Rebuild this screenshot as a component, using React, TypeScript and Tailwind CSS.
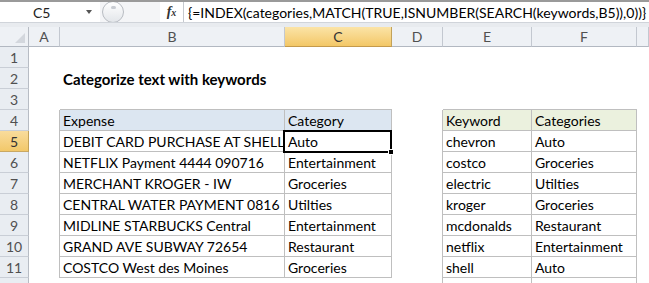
import React from "react";

const COLS = ["A", "B", "C", "D", "E", "F", ""];
const COL_W = ["w-[31px]", "w-[225px]", "w-[107px]", "w-[51px]", "w-[89px]", "w-[105px]", "w-[12px]"];

type CellDef = { text?: string; fill?: string };

const expenses: [string, string][] = [
  ["DEBIT CARD PURCHASE AT SHELL", "Auto"],
  ["NETFLIX Payment 4444 090716", "Entertainment"],
  ["MERCHANT KROGER - IW", "Groceries"],
  ["CENTRAL WATER PAYMENT 0816", "Utilties"],
  ["MIDLINE STARBUCKS Central", "Entertainment"],
  ["GRAND AVE SUBWAY 72654", "Restaurant"],
  ["COSTCO West des Moines", "Groceries"],
];

const keywords: [string, string][] = [
  ["chevron", "Auto"],
  ["costco", "Groceries"],
  ["electric", "Utilties"],
  ["kroger", "Groceries"],
  ["mcdonalds", "Restaurant"],
  ["netflix", "Entertainment"],
  ["shell", "Auto"],
  ["", ""],
];

function cellContent(row: number, col: number): CellDef {
  if (row === 2 && col === 1) return { text: "Categorize text with keywords" };
  if (row === 4) {
    if (col === 1) return { text: "Expense", fill: "bg-[#dce6f1]" };
    if (col === 2) return { text: "Category", fill: "bg-[#dce6f1]" };
    if (col === 4) return { text: "Keyword", fill: "bg-[#ebf1de]" };
    if (col === 5) return { text: "Categories", fill: "bg-[#ebf1de]" };
  }
  if (row >= 5 && row <= 11) {
    const e = expenses[row - 5];
    if (col === 1) return { text: e[0] };
    if (col === 2) return { text: e[1] };
  }
  if (row >= 5 && row <= 12) {
    const k = keywords[row - 5];
    if (col === 4) return { text: k[0] };
    if (col === 5) return { text: k[1] };
  }
  return {};
}

function inT1(row: number, col: number) {
  return row >= 4 && row <= 11 && (col === 1 || col === 2);
}
function inT2(row: number, col: number) {
  return row >= 4 && row <= 12 && (col === 4 || col === 5);
}
function inTable(row: number, col: number) {
  return inT1(row, col) || inT2(row, col);
}

function Cell({ row, col }: { row: number; col: number }) {
  const c = cellContent(row, col);
  const tbl = inTable(row, col);
  const rightB = tbl || inTable(row, col + 1);
  const bottomB = (tbl && !(row === 12)) || inTable(row + 1, col);
  const selected = row === 5 && col === 2;
  const isTitle = row === 2 && col === 1;
  return (
    <div
      className={[
        "relative h-[21px] shrink-0 flex items-center whitespace-nowrap",
        COL_W[col],
        rightB ? "border-r border-r-[#bfbfbf]" : "",
        bottomB ? "border-b border-b-[#bfbfbf]" : "",
        c.fill ?? "",
      ].join(" ")}
    >
      {c.text ? (
        <span
          className={
            isTitle
              ? "pl-[3px] pt-[2px] text-[15px] font-bold text-black leading-none"
              : "pl-[3px] pt-[2px] text-[14px] text-black leading-none"
          }
        >
          {c.text}
        </span>
      ) : null}
      {selected ? (
        <div className="absolute left-[-2px] top-[-1px] right-[-1px] bottom-[-2px] border-2 border-black z-10">
          <div className="absolute right-[-4px] bottom-[-4px] w-[6px] h-[6px] bg-black border border-white" />
        </div>
      ) : null}
    </div>
  );
}

function RowHeader({ n }: { n: number }) {
  const sel = n === 5;
  return (
    <div
      className={[
        "w-[29px] h-[21px] shrink-0 flex items-center justify-center border-r border-b text-[14px] leading-none pt-[1px]",
        sel
          ? "bg-gradient-to-b from-[#f9dc9c] to-[#f2c869] border-r-[#c2a25a] border-b-[#c9a863] text-[#333]"
          : "bg-[#e9edf2] border-r-[#b7bcc4] border-b-[#c9ced6] text-[#505050]",
      ].join(" ")}
    >
      {n}
    </div>
  );
}

function ColHeader({ i }: { i: number }) {
  const sel = i === 2;
  return (
    <div
      className={[
        "h-[20px] shrink-0 flex items-center justify-center border-r border-b text-[14px] leading-none pt-[1px]",
        COL_W[i],
        sel
          ? "bg-gradient-to-b from-[#fbe4a6] to-[#f3c766] border-r-[#c2a25a] border-b-[#c49a4c] text-[#333]"
          : "bg-[#eef1f5] border-r-[#c3c8d0] border-b-[#b2b8c1] text-[#505050]",
      ].join(" ")}
    >
      {COLS[i]}
    </div>
  );
}

export default function App() {
  const rows = Array.from({ length: 12 }, (_, i) => i + 1);
  return (
    <div className="w-[649px] h-[283px] overflow-hidden bg-white font-['Lato',_'Open_Sans',_sans-serif]">
      {/* Formula bar */}
      <div className="h-[27px] border-t-2 border-t-[#9a9a9a] bg-[#e8ebef] flex flex-col">
        <div className="h-[20px] flex items-stretch bg-white">
          <div className="w-[100px] flex items-center relative">
            <span className="pl-[33px] pt-[1px] text-[14px] text-[#222] leading-none">C5</span>
            <span className="absolute left-[86px] top-[8px] w-0 h-0 border-l-[3px] border-r-[3px] border-t-[4px] border-l-transparent border-r-transparent border-t-[#555]" />
          </div>
          <div className="w-[60px] flex items-center bg-[#f4f5f7] overflow-hidden">
            <div className="ml-[2px] w-[22px] h-[22px] rounded-full border border-[#b8bcc2] bg-gradient-to-b from-white to-[#e3e6ea] flex items-start justify-center">
              <div className="mt-[4px] w-[5px] h-[3px] rounded-full bg-[#c8ccd2]" />
            </div>
          </div>
          <div className="w-[24px] flex items-center justify-center border-r border-r-[#c5c9cf] bg-white">
            <span className="font-['Liberation_Serif',_serif] italic font-bold text-[14px] text-[#333] leading-none">
              f<span className="text-[10px]">x</span>
            </span>
          </div>
          <div className="flex-1 flex items-center pl-[4px] overflow-hidden whitespace-nowrap">
            <span className="pt-[1px] text-[14px] text-black leading-none">
              {"{=INDEX(categories,MATCH(TRUE,ISNUMBER(SEARCH(keywords,B5)),0))}"}
            </span>
          </div>
        </div>
        <div className="flex-1 border-t border-t-[#d0d4da]" />
      </div>

      {/* Column headers */}
      <div className="flex">
        <div className="w-[29px] h-[20px] shrink-0 bg-[#eef1f5] border-r border-b border-r-[#b7bcc4] border-b-[#b2b8c1] flex items-end justify-end p-[3px]">
          <svg width="10" height="10" viewBox="0 0 10 10">
            <polygon points="10,0 10,10 0,10" fill="#d3d7dd" />
          </svg>
        </div>
        {COLS.map((_, i) => (
          <ColHeader key={i} i={i} />
        ))}
      </div>

      {/* Body */}
      {rows.map((r) => (
        <div key={r} className="flex">
          <RowHeader n={r} />
          {COLS.map((_, c) => (
            <Cell key={c} row={r} col={c} />
          ))}
        </div>
      ))}
    </div>
  );
}
